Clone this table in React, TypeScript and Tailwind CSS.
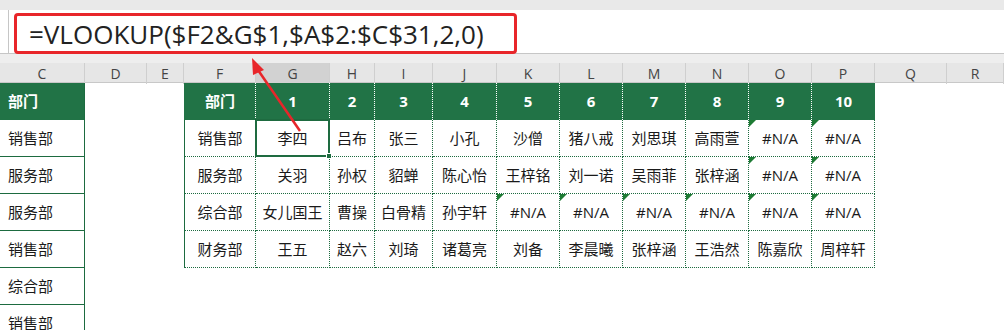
import React from 'react';

const cols = ['C', 'D', 'E', 'F', 'G', 'H', 'I', 'J', 'K', 'L', 'M', 'N', 'O', 'P', 'Q', 'R'];
const grid = 'grid grid-cols-[85px_62px_37px_72px_74px_45px_58px_64px_63px_63px_63px_63px_63px_63px_72px_1fr]';

const leftCol = ['销售部', '服务部', '服务部', '销售部', '综合部', '销售部'];

const rows: [string, string[]][] = [
  ['销售部', ['李四', '吕布', '张三', '小孔', '沙僧', '猪八戒', '刘思琪', '高雨萱', '#N/A', '#N/A']],
  ['服务部', ['关羽', '孙权', '貂蝉', '陈心怡', '王梓铭', '刘一诺', '吴雨菲', '张梓涵', '#N/A', '#N/A']],
  ['综合部', ['女儿国王', '曹操', '白骨精', '孙宇轩', '#N/A', '#N/A', '#N/A', '#N/A', '#N/A', '#N/A']],
  ['财务部', ['王五', '赵六', '刘琦', '诸葛亮', '刘备', '李晨曦', '张梓涵', '王浩然', '陈嘉欣', '周梓轩']],
];

const font = { fontFamily: '"Open Sans", "Noto Sans CJK SC", sans-serif' };

const ErrorMark = () => (
  <div className="absolute left-0 top-0 h-0 w-0 border-t-[7px] border-r-[7px] border-t-[#1e7b34] border-r-transparent" />
);

export default function App() {
  return (
    <div className="relative h-[330px] w-[1004px] overflow-hidden bg-white text-[#1a1a1a]" style={font}>
      {/* top strip */}
      <div className="h-[10px] bg-[#e9e9e9]" />

      {/* formula bar */}
      <div className="flex h-[44px] border-b border-[#c6c6c6] bg-white">
        <div className="w-[9px] border-r border-[#c6c6c6] bg-white" />
        <div className="ml-[5px] mt-[3px] flex h-[41px] w-[503px] items-center rounded-[4px] border-[3px] border-[#e8262a] pl-[12px] text-[26px] leading-none text-[#222]">
          =VLOOKUP($F2&amp;G$1,$A$2:$C$31,2,0)
        </div>
      </div>

      <div className="h-[9px] bg-[#eeeeee]" />

      {/* column letters */}
      <div className={`${grid} h-[20px] border-b border-[#c8c8c8] bg-[#e6e6e6] text-[14px] text-[#444]`}>
        {cols.map((c) => (
          <div
            key={c}
            className={`flex items-center justify-center border-r border-[#cfcfcf] ${c === 'G' ? 'bg-[#d2d2d2]' : ''}`}
          >
            {c}
          </div>
        ))}
      </div>

      {/* header row */}
      <div className={`${grid} h-[37px] text-[15px] font-bold text-white`}>
        <div className="flex items-center border-r border-[#1d6b40] bg-[#217346] pl-[8px]">部门</div>
        <div />
        <div />
        <div className="flex items-center justify-center border-l border-r border-dotted border-l-[#217346] border-r-white bg-[#217346] [border-left-style:solid]">部门</div>
        {Array.from({ length: 10 }, (_, i) => (
          <div
            key={i}
            className={`flex items-center justify-center bg-[#217346] ${i < 9 ? 'border-r border-dotted border-white' : ''}`}
          >
            {i + 1}
          </div>
        ))}
        <div />
        <div />
      </div>

      {/* body rows */}
      {leftCol.map((dept, r) => {
        const row = rows[r];
        return (
          <div key={r} className={`${grid} h-[37px] text-[15px]`}>
            <div className="flex items-center border-b border-r border-[#1d6b40] pl-[8px]">{dept}</div>
            <div />
            <div />
            {row ? (
              <>
                <div className="flex items-center justify-center border-b border-l border-r border-dotted border-[#1d6b40] [border-left-style:solid]">
                  {row[0]}
                </div>
                {row[1].map((name, i) => (
                  <div
                    key={i}
                    className="relative flex items-center justify-center border-b border-r border-dotted border-[#1d6b40]"
                  >
                    {name === '#N/A' && <ErrorMark />}
                    {name}
                    {r === 0 && i === 0 && (
                      <>
                        <div className="absolute -left-px -top-px bottom-[-1px] right-[-1px] border-2 border-[#1e6b40]" />
                        <div className="absolute bottom-[-3px] right-[-3px] h-[6px] w-[6px] border border-white bg-[#1e6b40]" />
                      </>
                    )}
                  </div>
                ))}
              </>
            ) : (
              Array.from({ length: 11 }, (_, i) => <div key={i} />)
            )}
            <div />
            <div />
          </div>
        );
      })}

      {/* red arrow */}
      <svg className="pointer-events-none absolute left-0 top-0" width="1004" height="330">
        <line x1="300" y1="131" x2="258" y2="70" stroke="#e8262a" strokeWidth="2.5" />
        <polygon points="252,58 264,70 253,75" fill="#e8262a" />
      </svg>
    </div>
  );
}
